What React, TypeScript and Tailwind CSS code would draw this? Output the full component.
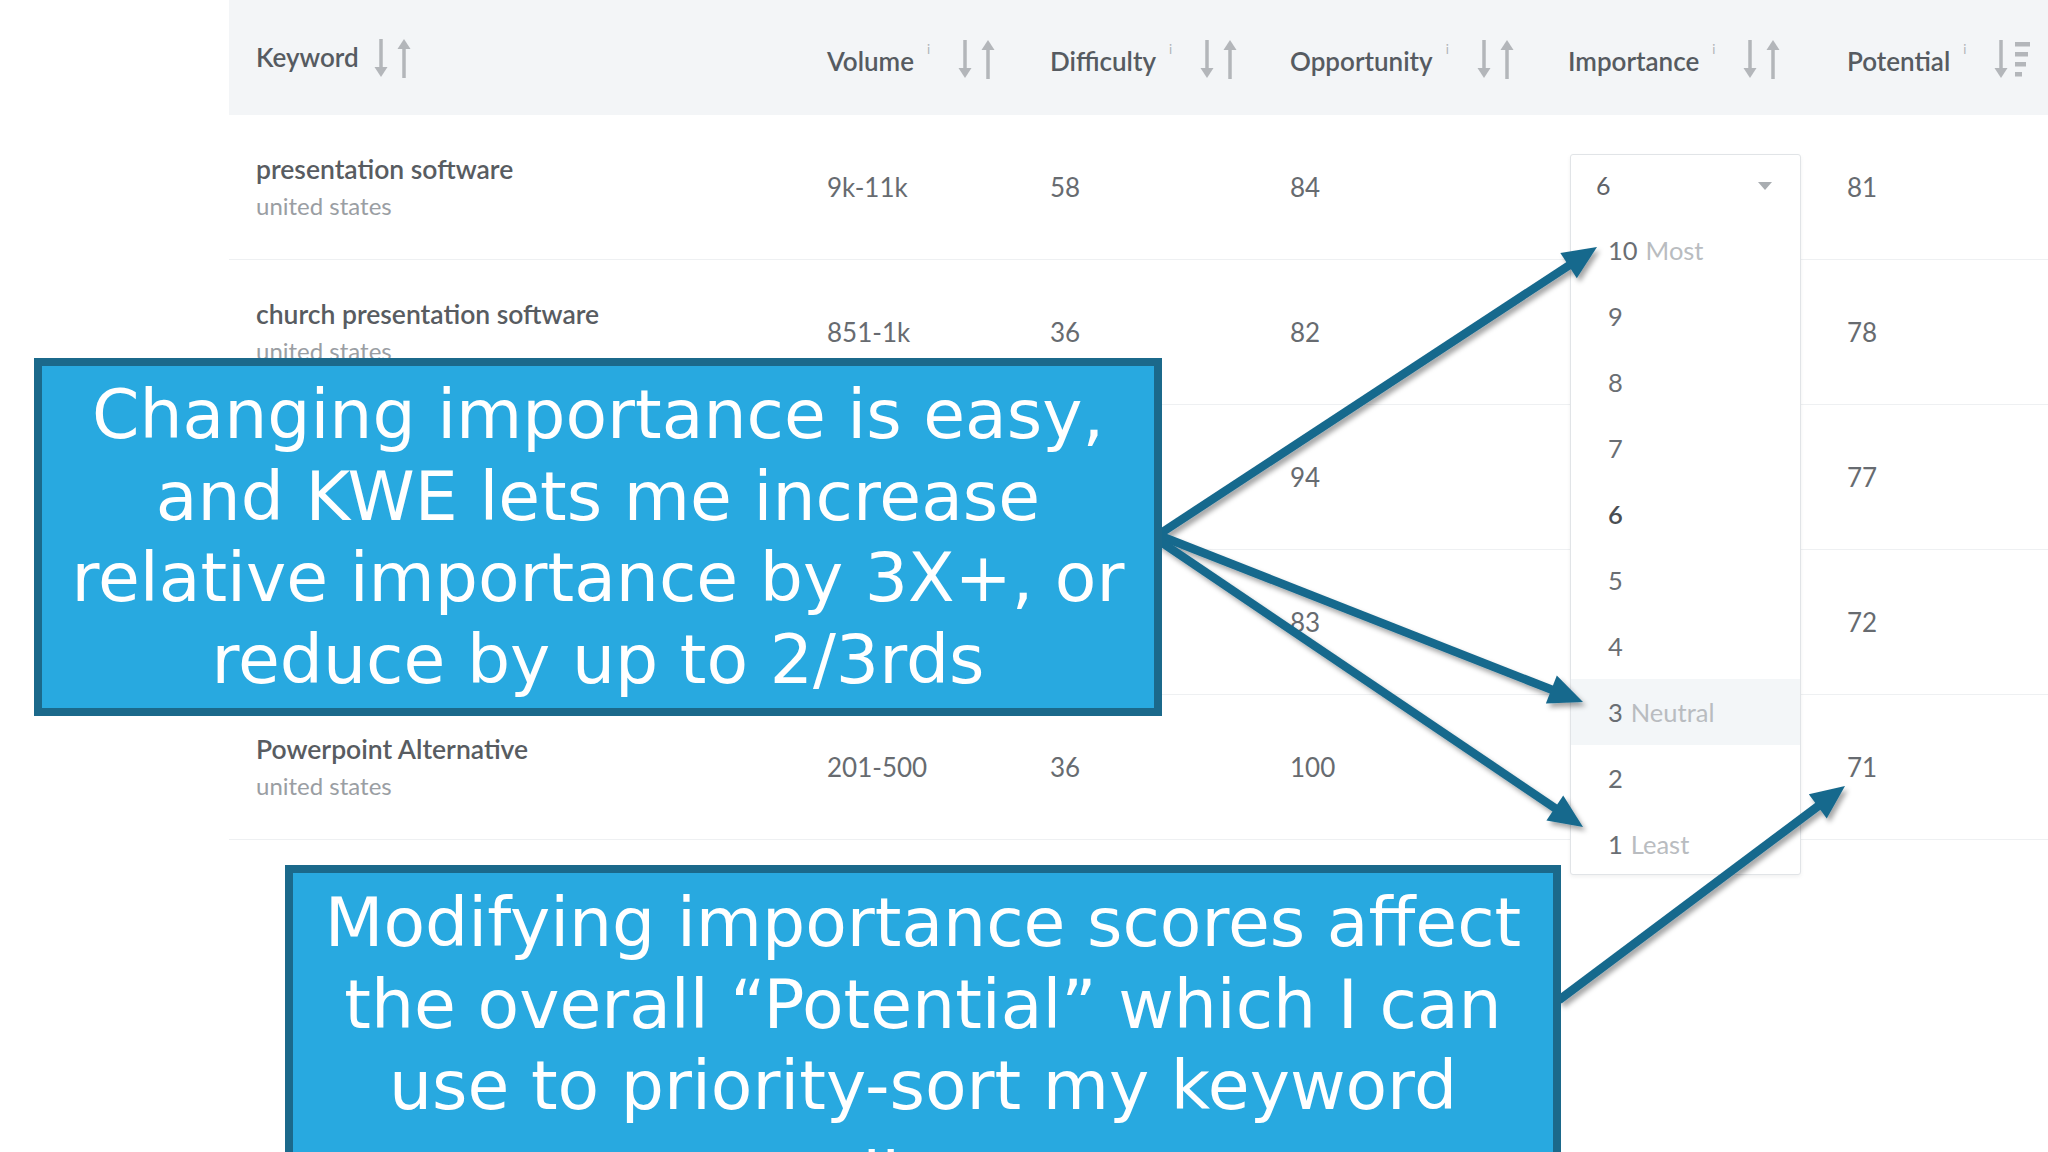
import React from "react";

type Row = { kw: string; sub: string; vol: string; diff: string; opp: string; pot: string };

const rows: Row[] = [
  { kw: "presentation software", sub: "united states", vol: "9k-11k", diff: "58", opp: "84", pot: "81" },
  { kw: "church presentation software", sub: "united states", vol: "851-1k", diff: "36", opp: "82", pot: "78" },
  { kw: "", sub: "", vol: "", diff: "", opp: "94", pot: "77" },
  { kw: "", sub: "", vol: "", diff: "", opp: "83", pot: "72" },
  { kw: "Powerpoint Alternative", sub: "united states", vol: "201-500", diff: "36", opp: "100", pot: "71" },
];

const options = [
  { n: "10", label: "Most" },
  { n: "9" },
  { n: "8" },
  { n: "7" },
  { n: "6", selected: true },
  { n: "5" },
  { n: "4" },
  { n: "3", label: "Neutral", hover: true },
  { n: "2" },
  { n: "1", label: "Least" },
];

const cols = "grid grid-cols-[571px_223px_240px_278px_279px_1fr] pl-[27px]";

const SortIcon = () => (
  <svg width="40" height="44" viewBox="0 0 40 44" className="shrink-0">
    <g fill="#b3b6ba" stroke="#b3b6ba">
      <line x1="8" y1="3" x2="8" y2="33" strokeWidth="3.5" />
      <polygon points="1.5,31 14.5,31 8,41" strokeWidth="0" />
      <line x1="31" y1="12" x2="31" y2="42" strokeWidth="3.5" />
      <polygon points="24.5,13 37.5,13 31,3" strokeWidth="0" />
    </g>
  </svg>
);

const SortDescIcon = () => (
  <svg width="42" height="44" viewBox="0 0 42 44" className="shrink-0">
    <g fill="#b3b6ba" stroke="#b3b6ba">
      <line x1="8" y1="3" x2="8" y2="33" strokeWidth="3.5" />
      <polygon points="1.5,31 14.5,31 8,41" strokeWidth="0" />
      <rect x="22" y="5" width="15" height="4.5" strokeWidth="0" />
      <rect x="22" y="15" width="13" height="4.5" strokeWidth="0" />
      <rect x="22" y="25" width="11" height="4.5" strokeWidth="0" />
      <rect x="22" y="35" width="7" height="4.5" strokeWidth="0" />
    </g>
  </svg>
);

const HeaderCell = ({ label, info = true, desc = false }: { label: string; info?: boolean; desc?: boolean }) => (
  <div className={`flex items-center ${info ? "mt-[8px]" : ""}`}>
    <span className="text-[26px] font-semibold text-[#565b61]">{label}</span>
    {info && <span className="ml-[13px] -mt-[24px] text-[13px] text-[#b0b3b7]">i</span>}
    <span className={info ? "ml-[27px] -mt-[6px]" : "ml-[14px]"}>{desc ? <SortDescIcon /> : <SortIcon />}</span>
  </div>
);

const Arrow = ({ x1, y1, x2, y2 }: { x1: number; y1: number; x2: number; y2: number }) => {
  const dx = x2 - x1;
  const dy = y2 - y1;
  const len = Math.hypot(dx, dy);
  const ux = dx / len;
  const uy = dy / len;
  const hl = 34;
  const hw = 15;
  const bx = x2 - ux * hl;
  const by = y2 - uy * hl;
  const px = -uy;
  const py = ux;
  const pts = `${x2},${y2} ${bx + px * hw},${by + py * hw} ${bx - px * hw},${by - py * hw}`;
  return (
    <g>
      <line x1={x1} y1={y1} x2={bx + ux * 4} y2={by + uy * 4} stroke="#19698d" strokeWidth="8.5" />
      <polygon points={pts} fill="#19698d" />
    </g>
  );
};

const ImportanceSelect = () => (
  <div className="absolute left-[2px] top-[39px] w-[231px] h-[721px] bg-white border border-[#e1e4e7] rounded-[3px] shadow-[0_2px_4px_rgba(0,0,0,0.06)] z-10">
    <div className="h-[62px] flex items-center justify-between pl-[25px] pr-[28px]">
      <span className="text-[25px] text-[#5f6368]">6</span>
      <svg width="14" height="8" viewBox="0 0 14 8">
        <polygon points="0,0 14,0 7,8" fill="#a9adb1" />
      </svg>
    </div>
    {options.map((o) => (
      <div
        key={o.n}
        className={`h-[66px] flex items-center pl-[37px] text-[25.5px] ${o.hover ? "bg-[#f3f6f8]" : ""}`}
      >
        <span className={o.selected ? "text-[#4a4e53] font-semibold" : "text-[#6a6e73]"}>{o.n}</span>
        {o.label && <span className="ml-[8px] text-[#b9bcc0]">{o.label}</span>}
      </div>
    ))}
  </div>
);

export default function App() {
  return (
    <div className="relative w-[2048px] h-[1152px] overflow-hidden bg-white font-['Lato',sans-serif]">
      {/* table */}
      <div className="ml-[229px]">
        <div className={`${cols} h-[115px] items-center bg-[#f3f5f7]`}>
          <HeaderCell label="Keyword" info={false} />
          <HeaderCell label="Volume" />
          <HeaderCell label="Difficulty" />
          <HeaderCell label="Opportunity" />
          <HeaderCell label="Importance" />
          <HeaderCell label="Potential" desc />
        </div>
        {rows.map((r, i) => (
          <div key={i} className={`${cols} h-[145px] items-center border-b border-[#eef0f2] text-[26px] text-[#676b70]`}>
            <div className="flex flex-col">
              <span className="text-[26.5px] font-semibold text-[#585c61] leading-[37px]">{r.kw}</span>
              <span className="text-[24px] text-[#9a9ea3] leading-[35px]">{r.sub}</span>
            </div>
            <div>{r.vol}</div>
            <div>{r.diff}</div>
            <div>{r.opp}</div>
            <div className="relative h-full">{i === 0 && <ImportanceSelect />}</div>
            <div>{r.pot}</div>
          </div>
        ))}
      </div>

      {/* arrows */}
      <svg className="absolute inset-0 z-20 pointer-events-none" width="2048" height="1152" viewBox="0 0 2048 1152">
        <defs>
          <filter id="sh" x="-10%" y="-10%" width="120%" height="120%">
            <feDropShadow dx="3" dy="4" stdDeviation="2.5" floodColor="#000" floodOpacity="0.35" />
          </filter>
        </defs>
        <g filter="url(#sh)">
          <Arrow x1={1158} y1={535} x2={1597} y2={247} />
          <Arrow x1={1158} y1={535} x2={1583} y2={702} />
          <Arrow x1={1158} y1={540} x2={1583} y2={827} />
          <Arrow x1={1559} y1={1000} x2={1845} y2={786} />
        </g>
      </svg>

      {/* callouts */}
      <div className="absolute left-[34px] top-[358px] w-[1128px] h-[358px] z-30 bg-[#28a9e0] border-[8px] border-[#1b698b] flex items-center justify-center">
        <p className="text-center text-white text-[68px] leading-[81.5px] font-['DejaVu_Sans',sans-serif] whitespace-nowrap">
          Changing importance is easy,
          <br />
          and KWE lets me increase
          <br />
          relative importance by 3X+, or
          <br />
          reduce by up to 2/3rds
        </p>
      </div>

      <div className="absolute left-[285px] top-[865px] w-[1276px] h-[420px] z-30 bg-[#28a9e0] border-[8px] border-[#1b698b] pt-[9px]">
        <p className="text-center text-white text-[68px] leading-[81.5px] font-['DejaVu_Sans',sans-serif] whitespace-nowrap">
          Modifying importance scores affect
          <br />
          the overall “Potential” which I can
          <br />
          use to priority-sort my keyword
        </p>
        <p className="mt-[10px] text-center text-white text-[68px] leading-[81.5px] font-['DejaVu_Sans',sans-serif]">
          list.
        </p>
      </div>
    </div>
  );
}
